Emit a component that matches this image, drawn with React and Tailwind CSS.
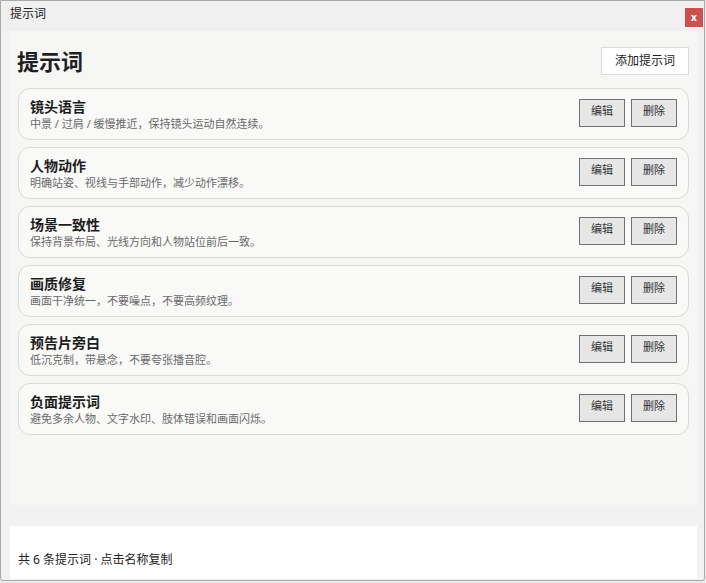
import React from "react";

const items = [
  ["镜头语言", "中景 / 过肩 / 缓慢推近，保持镜头运动自然连续。"],
  ["人物动作", "明确站姿、视线与手部动作，减少动作漂移。"],
  ["场景一致性", "保持背景布局、光线方向和人物站位前后一致。"],
  ["画质修复", "画面干净统一，不要噪点，不要高频纹理。"],
  ["预告片旁白", "低沉克制，带悬念，不要夸张播音腔。"],
  ["负面提示词", "避免多余人物、文字水印、肢体错误和画面闪烁。"],
];

const font = { fontFamily: '"Noto Sans", "Noto Sans CJK SC", sans-serif' };

export default function App() {
  return (
    <div className="w-[706px] h-[583px] bg-[#e9e9e9] overflow-hidden" style={font}>
      <div className="w-[705px] h-[581px] border border-[#a9a9a9] bg-[#f2f2f2] flex flex-col rounded-b-[3px]">
        <div className="h-[30px] flex justify-between bg-[#f0f0f0]">
          <div className="pl-[9px] pt-[5px] text-[12px] leading-[16px] text-[#1a1a1a]">提示词</div>
          <div className="mt-[7px] mr-[1px] w-[18px] h-[19px] bg-[#c9514f] text-white text-[10px] font-bold leading-[18px] text-center">x</div>
        </div>
        <div className="ml-[9px] mr-[7px] h-[474px] bg-[#f6f6f5] px-[8px] pt-[16px] flex flex-col">
          <div className="h-[28px] flex items-center justify-between">
            <div className="text-[22px] font-bold leading-[28px] text-[#1f1f1f] -ml-[1px]">提示词</div>
            <div className="h-[28px] w-[88px] bg-white border border-[#dcdcdc] text-[12px] text-[#222] flex items-center justify-center">添加提示词</div>
          </div>
          <div className="mt-[13px] flex flex-col gap-[7px]">
            {items.map(([t, d]) => (
              <div key={t} className="h-[52px] rounded-[12px] border border-[#d9d9d6] bg-[#f9f9f8] pl-[11px] pr-[11px] flex items-center justify-between">
                <div className="flex flex-col -mt-[1px]">
                  <div className="text-[14px] font-bold leading-[19px] text-[#1c1c1c]">{t}</div>
                  <div className="text-[11px] leading-[15px] text-[#6a6a6a]">{d}</div>
                </div>
                <div className="flex gap-[6px] -mt-[2px]">
                  <div className="w-[46px] h-[28px] bg-[#e6e6e6] border border-[#707070] text-[11px] text-[#333] flex items-center justify-center pb-[4px]">编辑</div>
                  <div className="w-[46px] h-[28px] bg-[#e6e6e6] border border-[#707070] text-[11px] text-[#333] flex items-center justify-center pb-[4px]">删除</div>
                </div>
              </div>
            ))}
          </div>
        </div>
        <div className="mt-[21px] ml-[9px] mr-[7px] h-[53px] bg-white px-[8px] flex items-end pb-[12px]">
          <div className="text-[12px] leading-[15px] text-[#222]">共 6 条提示词 · 点击名称复制</div>
        </div>
      </div>
    </div>
  );
}
